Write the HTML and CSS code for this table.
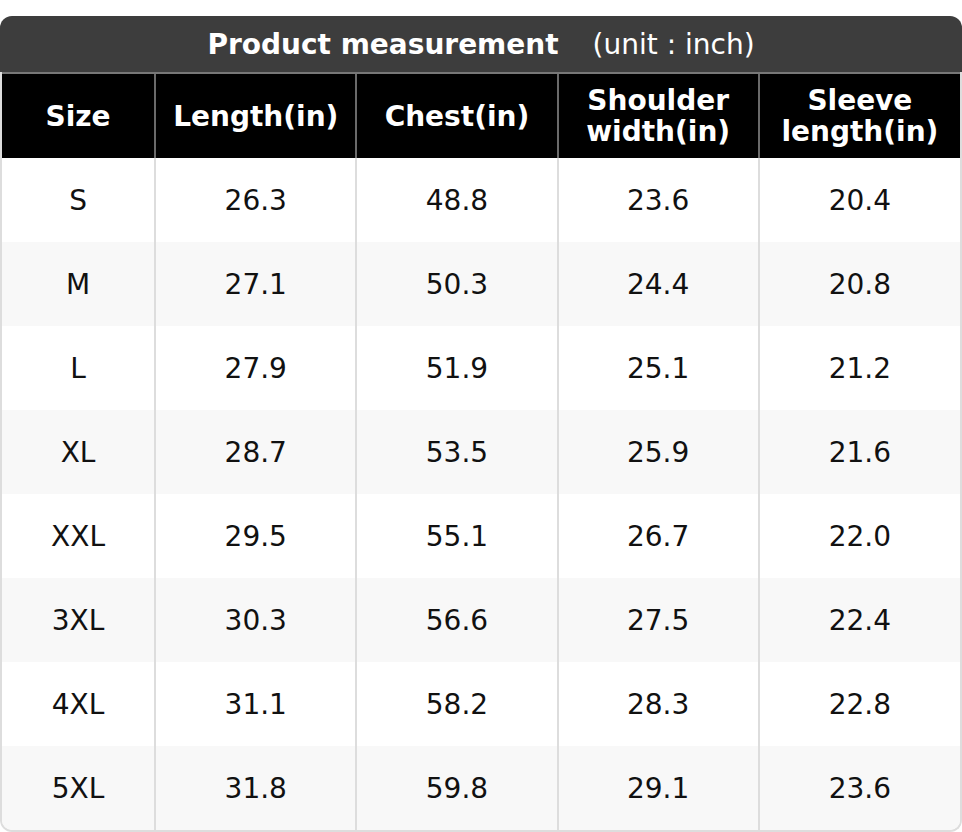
FILE: index.html
```html
<!DOCTYPE html>
<html>
<head>
<meta charset="utf-8">
<link rel="stylesheet" href="styles.css">
</head>
<body>
<div class="sheet">
  <div class="title"><span class="title-main">Product measurement</span><span class="title-unit">(unit : inch)</span></div>
  <table class="grid">
    <colgroup>
      <col class="c-size"><col class="c-val"><col class="c-val"><col class="c-val"><col class="c-val">
    </colgroup>
    <thead>
      <tr><th>Size</th><th>Length(in)</th><th>Chest(in)</th><th>Shoulder<br>width(in)</th><th>Sleeve<br>length(in)</th></tr>
    </thead>
    <tbody>
      <tr><td>S</td><td>26.3</td><td>48.8</td><td>23.6</td><td>20.4</td></tr>
      <tr><td>M</td><td>27.1</td><td>50.3</td><td>24.4</td><td>20.8</td></tr>
      <tr><td>L</td><td>27.9</td><td>51.9</td><td>25.1</td><td>21.2</td></tr>
      <tr><td>XL</td><td>28.7</td><td>53.5</td><td>25.9</td><td>21.6</td></tr>
      <tr><td>XXL</td><td>29.5</td><td>55.1</td><td>26.7</td><td>22.0</td></tr>
      <tr><td>3XL</td><td>30.3</td><td>56.6</td><td>27.5</td><td>22.4</td></tr>
      <tr><td>4XL</td><td>31.1</td><td>58.2</td><td>28.3</td><td>22.8</td></tr>
      <tr><td>5XL</td><td>31.8</td><td>59.8</td><td>29.1</td><td>23.6</td></tr>
    </tbody>
  </table>
</div>
</body>
</html>
```
FILE: styles.css
```css
html, body {
  margin: 0;
  padding: 0;
  background: #ffffff;
}
body {
  font-family: "DejaVu Sans", Verdana, sans-serif;
  color: #111111;
}
.sheet {
  margin-top: 16px;
  width: 958px;
  border: 2px solid #dddddd;
  border-top: 0;
  border-radius: 12px;
}
.title {
  margin: 0 -2px;
  height: 56px;
  background: #3d3d3d;
  border-radius: 12px 12px 0 0;
  color: #ffffff;
  font-size: 28px;
  display: flex;
  align-items: center;
  justify-content: center;
  gap: 34px;
}
.title-main {
  font-weight: bold;
}
.title-unit {
  font-weight: normal;
}
.grid {
  width: 958px;
  border-collapse: collapse;
  table-layout: fixed;
}
.c-size { width: 153px; }
.c-val { width: 201px; }
.grid th {
  background: #000000;
  color: #ffffff;
  font-weight: bold;
  font-size: 28px;
  line-height: 31px;
  height: 84px;
  padding: 0;
  border-top: 2px solid #777777;
  border-left: 2px solid #6a6a6a;
}
.grid th:first-child {
  border-left: 0;
}
.grid td {
  height: 84px;
  padding: 0;
  text-align: center;
  font-size: 28px;
  color: #111111;
  border-left: 2px solid #dddddd;
}
.grid td:first-child {
  border-left: 0;
}
.grid tbody tr:nth-child(even) td {
  background: #f8f8f8;
}
.grid tbody tr:last-child td:first-child {
  border-bottom-left-radius: 10px;
}
.grid tbody tr:last-child td:last-child {
  border-bottom-right-radius: 10px;
}
```
